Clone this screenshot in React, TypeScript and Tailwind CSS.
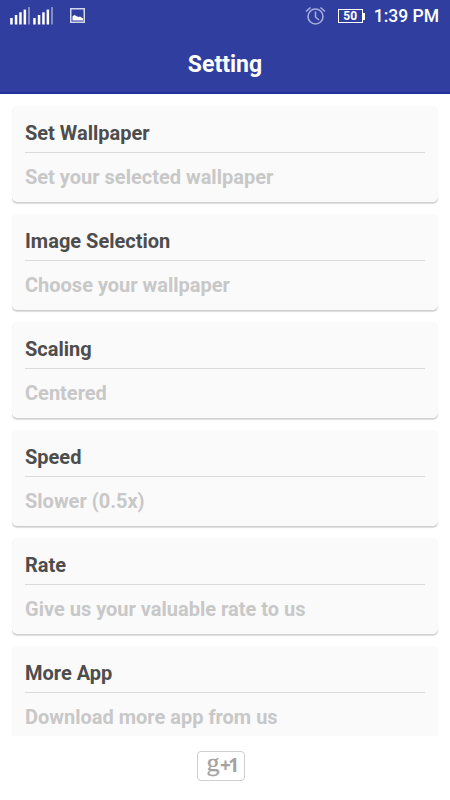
const settings = [
  { title: "Set Wallpaper", summary: "Set your selected wallpaper" },
  { title: "Image Selection", summary: "Choose your wallpaper" },
  { title: "Scaling", summary: "Centered" },
  { title: "Speed", summary: "Slower (0.5x)" },
  { title: "Rate", summary: "Give us your valuable rate to us" },
  { title: "More App", summary: "Download more app from us" },
];

export default function App() {
  return (
    <div className="flex h-[800px] w-[450px] flex-col overflow-hidden bg-white font-['Roboto',sans-serif]">
      <StatusBar />
      <header className="flex h-[62px] shrink-0 items-center justify-center border-b-2 border-[#1e319f] bg-[#303f9f] pt-[4px]">
        <h1 className="text-[23px] leading-none font-bold text-white">Setting</h1>
      </header>
      <main className="flex h-[642px] shrink-0 flex-col gap-3 overflow-hidden px-3 pt-3">
        {settings.map((s) => (
          <SettingCard key={s.title} title={s.title} summary={s.summary} />
        ))}
      </main>
      <footer className="flex flex-1 justify-center pt-[15px] pr-[8px]">
        <PlusOneButton />
      </footer>
    </div>
  );
}

function SettingCard({ title, summary }: { title: string; summary: string }) {
  return (
    <section className="h-24 shrink-0 rounded-[5px] bg-[#fafafa] px-[13px] shadow-[0_1px_0_#d0d0d0,0_2px_1px_rgba(0,0,0,0.14)]">
      <h2 className="h-[47px] border-b border-[#dadada] pt-[14px] text-xl leading-[26px] font-bold text-[#4d4d4d]">
        {title}
      </h2>
      <p className="pt-[11px] text-xl leading-[26px] font-bold text-[#c8c8c8]">{summary}</p>
    </section>
  );
}

function StatusBar() {
  return (
    <div className="flex h-8 shrink-0 items-center bg-[#303f9f] pr-[11px] pl-[10px] text-white">
      <SignalIcon />
      <SignalIcon />
      <PictureIcon />
      <div className="ml-auto flex items-center">
        <AlarmIcon />
        <BatteryIcon />
        <span className="ml-[9px] pt-px text-[17.5px] leading-[31px] font-medium">1:39 PM</span>
      </div>
    </div>
  );
}

function SignalIcon() {
  return (
    <svg width="23" height="32" viewBox="0 0 23 32" fill="currentColor">
      <rect x="0.2" y="18" width="2.5" height="6.5" />
      <rect x="4.8" y="15" width="2.5" height="9.5" />
      <rect x="9.2" y="12.3" width="2.5" height="12.2" />
      <rect x="13.6" y="9.6" width="2.5" height="14.9" />
      <rect x="18" y="7" width="2" height="17.5" opacity=".4" />
    </svg>
  );
}

function PictureIcon() {
  return (
    <svg className="ml-[14px]" width="15" height="32" viewBox="0 0 15 32" fill="none">
      <rect x=".75" y="8.75" width="13.5" height="13.5" stroke="#d3d7ee" strokeWidth="1.5" />
      <path d="M2.5 20.5v-4.2l2-1.3 2.3 1.3 1.7.6 1.5-.4 3 2v2z" fill="#fff" />
    </svg>
  );
}

function AlarmIcon() {
  return (
    <svg width="21" height="32" viewBox="0 0 21 32" fill="none" stroke="#a5adda" strokeWidth="1.6">
      <circle cx="10.5" cy="16.5" r="7.5" />
      <path d="M10.5 11.5V17l3.5 3M1 11.5l4.5-4M20 11.5l-4.5-4" />
    </svg>
  );
}

function BatteryIcon() {
  return (
    <div className="ml-[12px] flex items-center">
      <div className="flex h-[14px] w-[25px] items-center justify-center border-[1.5px] border-white text-[12px] leading-none font-bold">
        50
      </div>
      <div className="h-[7px] w-[2px] bg-white" />
    </div>
  );
}

function PlusOneButton() {
  return (
    <button
      type="button"
      className="flex h-[30px] w-[48px] rounded-[4px] border-[1.5px] border-[#cfcfcf] bg-white pl-[8px] text-[#a3a3a3]"
    >
      <span className="w-[14px] pt-px text-[26px] leading-[20px] font-['Liberation_Serif',serif] [-webkit-text-stroke:0.3px_#a3a3a3]">
        g
      </span>
      <span className="pt-[3px] text-[19px] leading-[20px] font-bold tracking-[-2.5px] font-['Open_Sans',sans-serif]">
        +1
      </span>
    </button>
  );
}
